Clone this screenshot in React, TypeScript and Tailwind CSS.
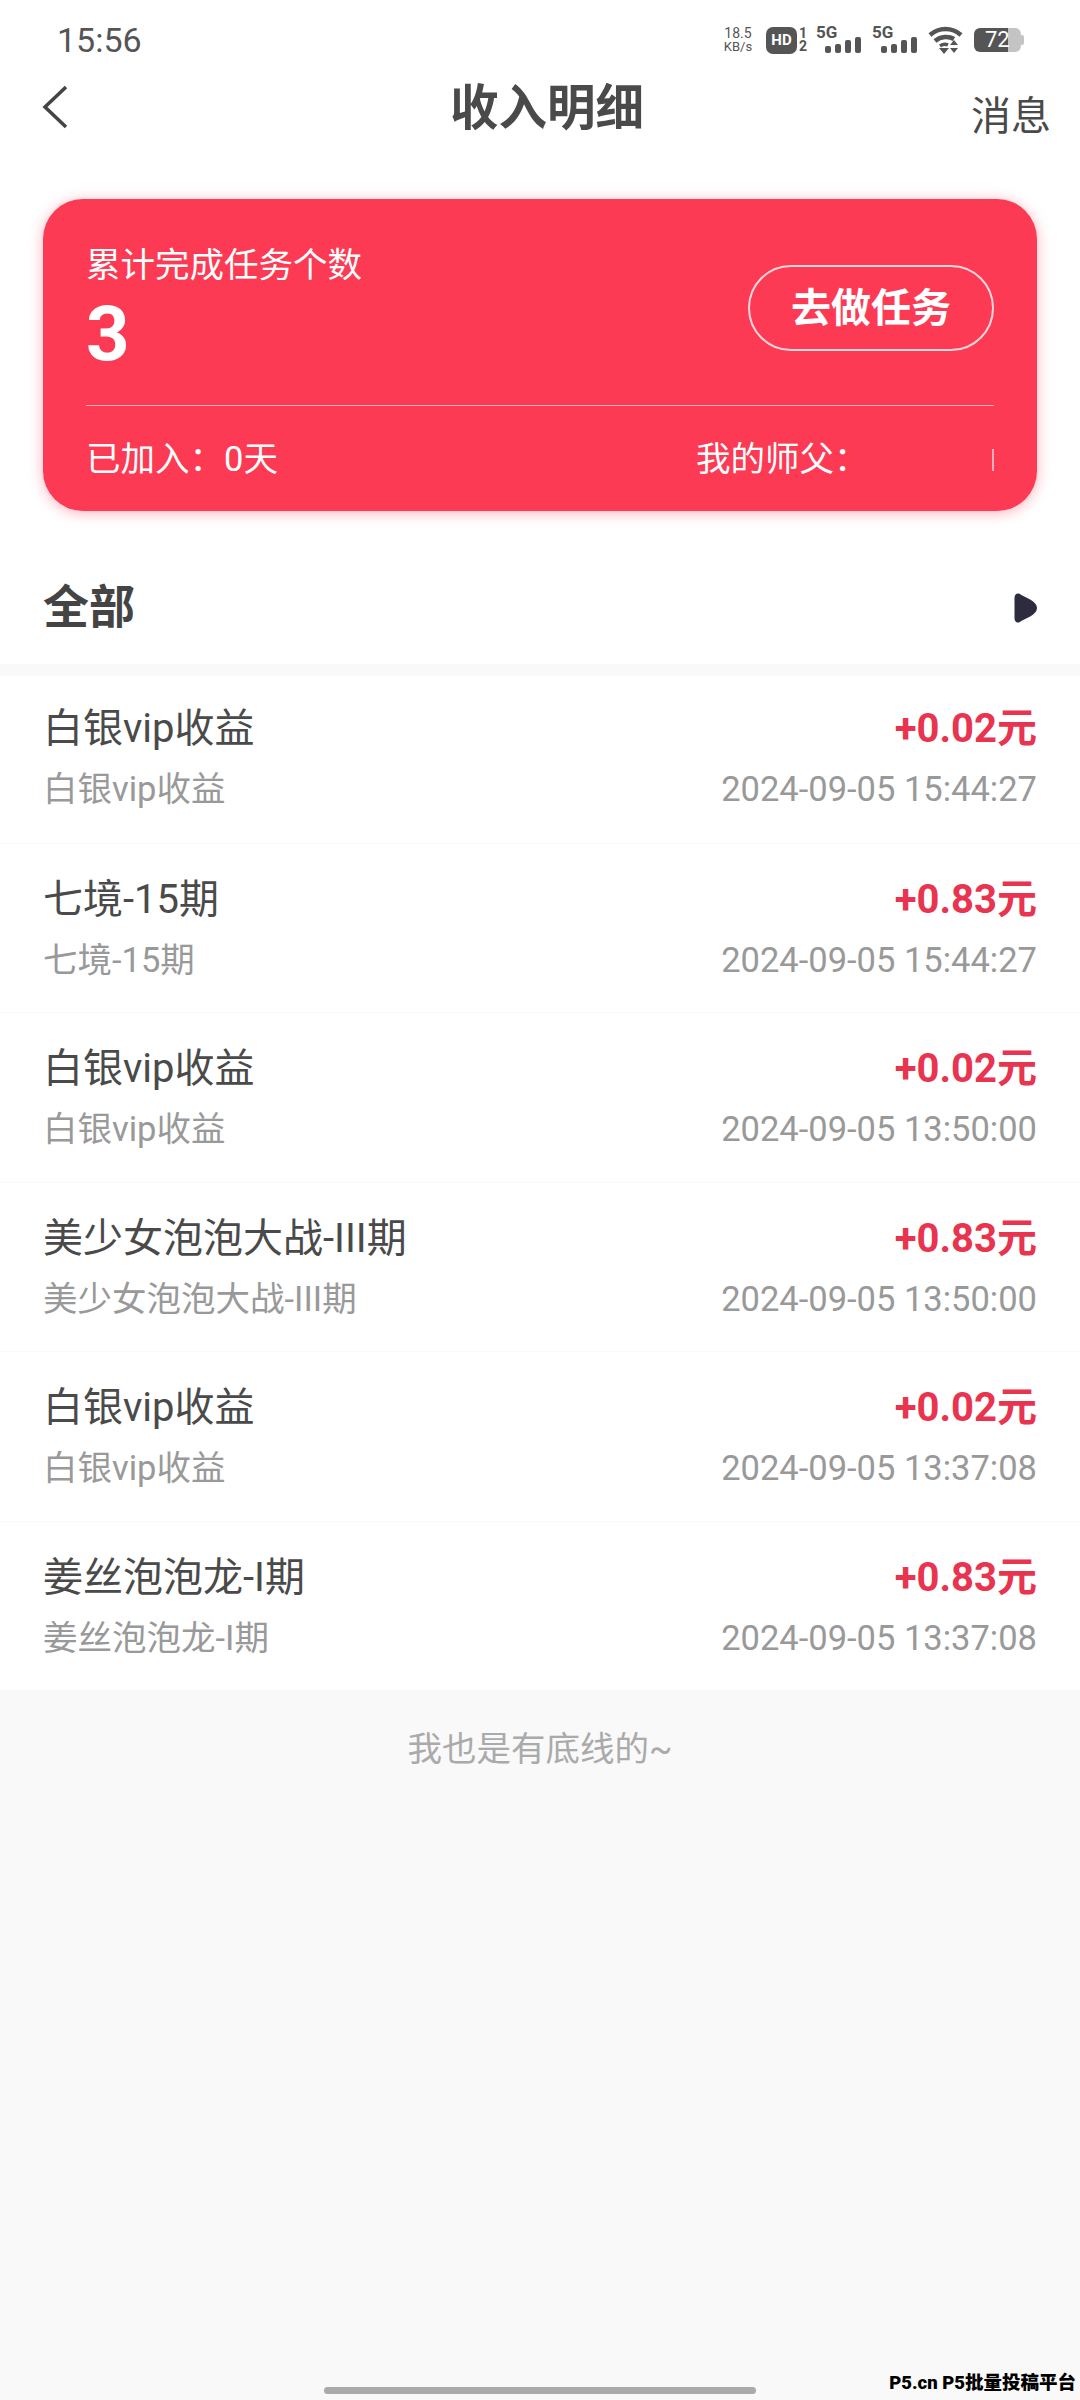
const rows = [
  { title: "白银vip收益", amount: "+0.02元", time: "2024-09-05 15:44:27" },
  { title: "七境-15期", amount: "+0.83元", time: "2024-09-05 15:44:27" },
  { title: "白银vip收益", amount: "+0.02元", time: "2024-09-05 13:50:00" },
  { title: "美少女泡泡大战-III期", amount: "+0.83元", time: "2024-09-05 13:50:00" },
  { title: "白银vip收益", amount: "+0.02元", time: "2024-09-05 13:37:08" },
  { title: "姜丝泡泡龙-I期", amount: "+0.83元", time: "2024-09-05 13:37:08" },
];

function Signal() {
  return (
    <div className="relative w-[45px] h-[28px]">
      <span className="absolute left-0 top-[-4px] text-[17px] leading-[20px] font-bold text-[#555]">5G</span>
      <svg className="absolute left-[9px] top-[11px]" width="36" height="17" viewBox="0 0 36 17" fill="#555">
        <rect x="0" y="9" width="6" height="7" rx="2" />
        <rect x="10" y="7" width="6" height="9" rx="2" />
        <rect x="20" y="3" width="6" height="13" rx="2" />
        <rect x="30" y="0" width="6" height="16" rx="2" />
      </svg>
    </div>
  );
}

function StatusBar() {
  return (
    <div className="h-[70px] pt-[10px] pl-[57px] pr-[56px] flex items-center justify-between text-[#555]">
      <span className="text-[34px] leading-[40px]">15:56</span>
      <div className="flex items-center">
        <div className="w-[32px] flex flex-col items-center text-[13px] leading-[14px] mr-[12px]">
          <span className="text-[14px]">18.5</span>
          <span>KB/s</span>
        </div>
        <div className="w-[31px] h-[27px] rounded-[7px] bg-[#555] text-white text-[15px] font-bold flex items-center justify-center">HD</div>
        <div className="w-[12px] flex flex-col items-center text-[14px] leading-[13px] font-bold mr-[7px]">
          <span>1</span>
          <span>2</span>
        </div>
        <Signal />
        <div className="w-[11px]" />
        <Signal />
        <svg className="ml-[11px]" width="35" height="28" viewBox="0 0 35 28" fill="none">
          <path d="M2 9 C11 1 24 1 33 9" stroke="#555" strokeWidth="4.5" />
          <path d="M7 15 C13 10 21 10 26 13" stroke="#555" strokeWidth="4.5" />
          <path d="M12 20 C15 18 18 18 20 19" stroke="#555" strokeWidth="3.5" />
          <path d="M11 22 L21 22 L16 28 Z" fill="#555" />
          <path d="M26 14 L30 19 L22 19 Z M22 22 L30 22 L26 27 Z" fill="#555" />
        </svg>
        <div className="relative ml-[11px] w-[50px] h-[24px] flex">
          <div className="w-[34px] h-full rounded-l-[6px] bg-[#555]" />
          <div className="w-[13px] h-full rounded-r-[6px] bg-[#c4c4c4]" />
          <div className="w-[3px] h-[10px] mt-[7px] bg-[#c4c4c4] rounded-r-[2px]" />
          <span className="absolute left-[11px] top-0 text-[22px] leading-[24px] text-white">72</span>
        </div>
      </div>
    </div>
  );
}

function NavBar() {
  return (
    <div className="relative h-[74px] pt-[3px] pl-[14px] flex items-center justify-center">
      <svg className="absolute left-[41px] top-[14px]" width="28" height="46" viewBox="0 0 28 46" fill="none">
        <path d="M25 3 L4 23 L25 43" stroke="#444" strokeWidth="3.5" />
      </svg>
      <h1 className="text-[48.5px] leading-[60px] font-bold text-[#4a4a4a]">收入明细</h1>
      <span className="absolute left-[971px] top-[23px] text-[40px] leading-[48px] text-[#4a4a4a]">消息</span>
    </div>
  );
}

function SummaryCard() {
  return (
    <div className="mx-[43px] mt-[55px] h-[312px] rounded-[40px] bg-[#fd3a54] shadow-[0_2px_14px_rgba(253,58,84,0.4)] px-[43px] text-white">
      <div className="h-[207px] border-b border-white/60 flex justify-between items-start">
        <div className="pt-[44px]">
          <div className="text-[34.5px] leading-[44px]">累计完成任务个数</div>
          <div className="mt-[6px] text-[76px] leading-[82px] font-bold">3</div>
        </div>
        <div className="mt-[66px] pt-[1px] w-[246px] h-[86px] rounded-full border-2 border-white/80 flex items-center justify-center text-[40px] font-bold">
          去做任务
        </div>
      </div>
      <div className="h-[104px] pt-[3px] flex items-center justify-between text-[34.5px]">
        <span>已加入：0天</span>
        <div className="flex items-center w-[298px]">
          <span className="whitespace-nowrap">我的师父：</span>
          <span className="ml-auto w-[2px] h-[22px] bg-white/60" />
        </div>
      </div>
    </div>
  );
}

function IncomeRow({ title, amount, time, first }: { title: string; amount: string; time: string; first: boolean }) {
  return (
    <div className={first ? "h-[167.5px] bg-white border-b border-[#fafafa] px-[43px] pt-[29px]" : "h-[169.5px] bg-white border-b border-[#fafafa] px-[43px] pt-[32px]"}>
      <div className="flex items-center justify-between h-[48px]">
        <span className="text-[40px] text-[#4a4a4a]">{title}</span>
        <span className="text-[40px] font-bold text-[#e8344f]">{amount}</span>
      </div>
      <div className="flex items-center justify-between h-[44px] mt-[15px] text-[34.5px] text-[#999]">
        <span>{title}</span>
        <span>{time}</span>
      </div>
    </div>
  );
}

export default function App() {
  return (
    <div className="relative w-[1080px] h-[2400px] overflow-hidden bg-[#f9f9f9] font-[Roboto,'Noto_Sans_CJK_SC',sans-serif]">
      <div className="bg-white h-[664px]">
        <StatusBar />
        <NavBar />
        <SummaryCard />
        <div className="h-[153px] pt-[40px] px-[43px] flex items-center justify-between">
          <span className="text-[46px] font-bold text-[#444]">全部</span>
          <svg width="23" height="30" viewBox="0 0 23 30">
            <path d="M5 0.5 C2 0 0.5 2 0.5 5 L0.5 25 C0.5 28 2 30 5 29.5 C12 25 23 22 23 15 C23 8 12 5 5 0.5 Z" fill="#2c2c3c" />
          </svg>
        </div>
      </div>
      <div className="mt-[12px]">
        {rows.map((row, i) => (
          <IncomeRow key={i} first={i === 0} {...row} />
        ))}
      </div>
      <div className="mt-[36px] text-center text-[34.5px] leading-[44px] text-[#aaa]">我也是有底线的~</div>
      <div className="absolute left-[324px] bottom-[6px] w-[432px] h-[7px] rounded-full bg-[#aaa]" />
      <div className="absolute right-[4px] bottom-[5px] text-[18.5px] leading-[24px] font-black text-black">P5.cn P5批量投稿平台</div>
    </div>
  );
}
